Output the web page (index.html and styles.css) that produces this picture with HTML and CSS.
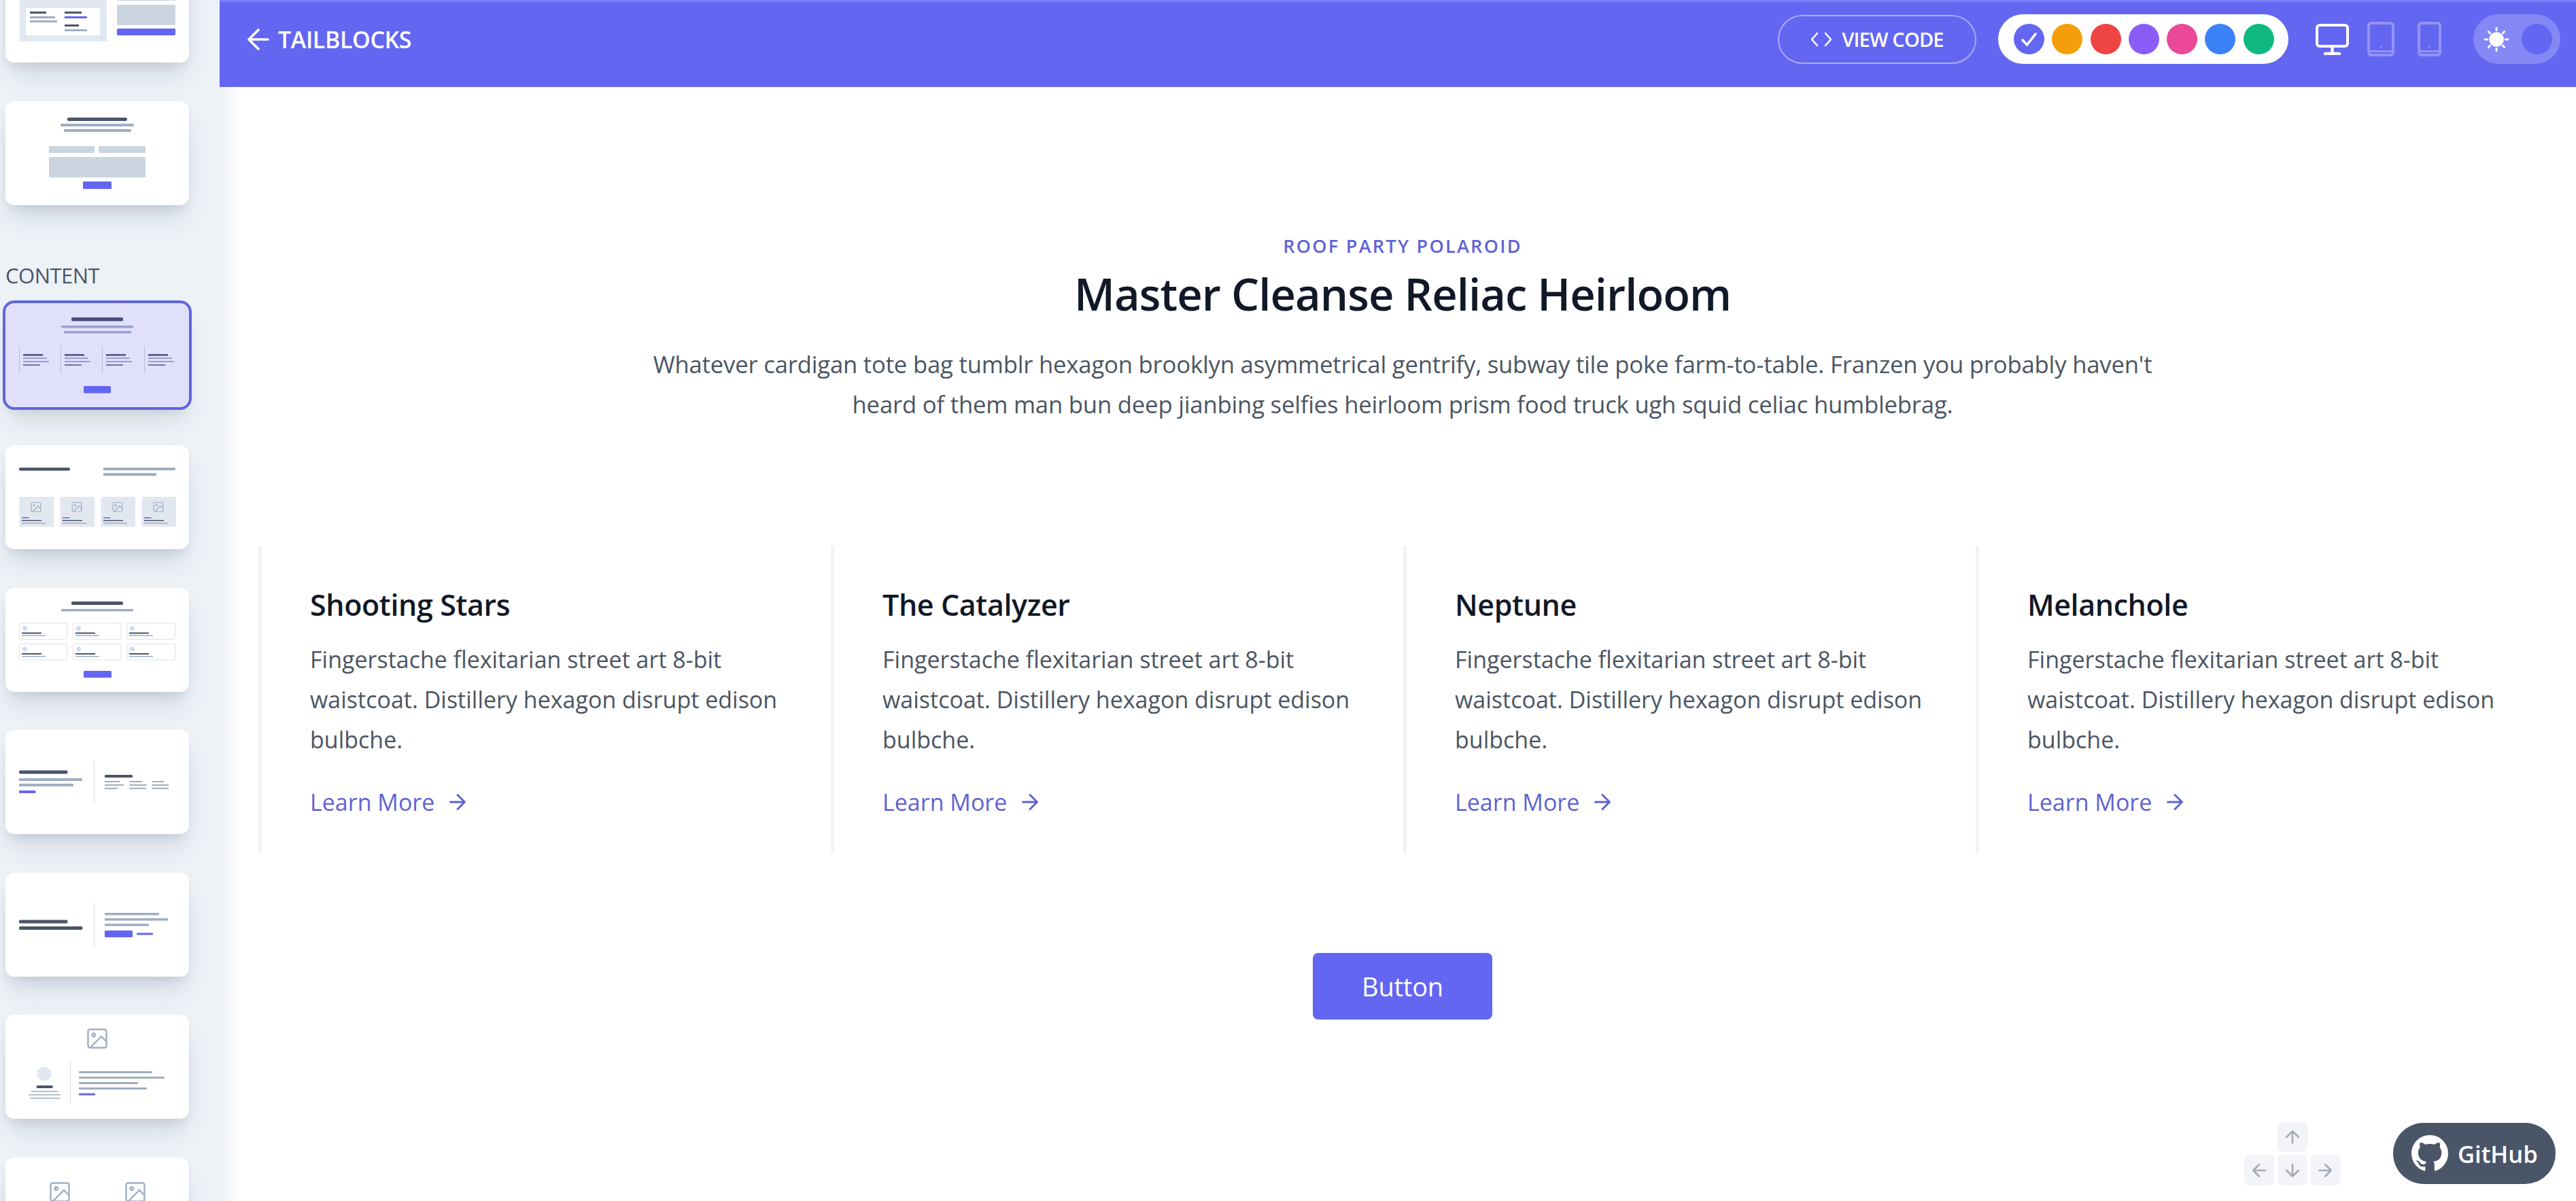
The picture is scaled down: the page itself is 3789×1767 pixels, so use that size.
FILE: index.html
```html
<!DOCTYPE html>
<html>
<head>
  <meta charset="utf-8">
  <title>Tailblocks</title>
  <link rel="stylesheet" href="styles.css">
</head>
<body>
  <svg class="defs" width="0" height="0">
    <symbol id="pic" viewBox="0 0 24 24">
      <rect x="3" y="3" width="18" height="18" rx="2" fill="none" stroke="currentColor" stroke-width="1.6"/>
      <circle cx="8.5" cy="8.5" r="1.5" fill="none" stroke="currentColor" stroke-width="1.6"/>
      <path d="M21 15l-5-5L5 21" fill="none" stroke="currentColor" stroke-width="1.6"/>
    </symbol>
    <symbol id="arrow-right" viewBox="0 0 24 24">
      <path d="M5 12h14M12 5l7 7-7 7" fill="none" stroke="currentColor" stroke-width="2" stroke-linecap="round" stroke-linejoin="round"/>
    </symbol>
  </svg>

  <aside class="sidebar">
    <div class="thumb-list">
      <div class="thumb">
        <svg viewBox="8 -61 270 153">
          <rect class="tile" x="29" y="-30" width="128" height="91"/>
          <rect class="paper" x="38" y="12" width="109" height="40"/>
          <rect class="dark" x="44" y="17" width="24" height="3"/>
          <rect class="grey" x="44" y="24" width="37" height="3"/>
          <rect class="grey" x="44" y="30" width="40" height="3"/>
          <rect class="dark" x="95" y="17" width="25" height="3"/>
          <rect class="blue" x="95" y="24" width="33" height="3"/>
          <rect class="dark" x="95" y="36" width="21" height="3"/>
          <rect class="grey" x="95" y="43" width="33" height="3"/>
          <rect class="field" x="172" y="-4" width="86" height="5"/>
          <rect class="field" x="172" y="7" width="86" height="30" rx="1"/>
          <rect class="blue" x="172" y="42" width="86" height="10" rx="1.5"/>
        </svg>
      </div>
      <div class="thumb">
        <svg viewBox="8 0 270 153">
          <rect class="dark" x="99" y="24" width="88" height="5" rx="2"/>
          <rect class="grey" x="89" y="33" width="108" height="4" rx="1"/>
          <rect class="grey" x="94" y="41" width="99" height="4" rx="1"/>
          <rect class="field" x="72" y="66" width="67" height="10" rx="1"/>
          <rect class="field" x="145" y="66" width="69" height="10" rx="1"/>
          <rect class="field" x="72" y="82" width="142" height="30" rx="1"/>
          <rect class="blue" x="122" y="118" width="42" height="11" rx="1.5"/>
        </svg>
      </div>

      <h3 class="thumb-label">CONTENT</h3>

      <div class="thumb thumb-active">
        <svg viewBox="0 0 270 153">
          <rect class="dark-tint" x="97" y="21" width="76" height="5.5" rx="2"/>
          <rect class="grey-tint" x="82" y="33" width="106" height="3.5" rx="1"/>
          <rect class="grey-tint" x="86" y="41" width="99" height="3.5" rx="1"/>
          <g>
            <rect class="rule-tint" x="20" y="63" width="1" height="40"/>
            <rect class="dark-tint" x="26" y="75" width="29" height="2.5"/>
            <rect class="grey-tint" x="26" y="80" width="35" height="2"/>
            <rect class="grey-tint" x="26" y="85" width="38" height="2"/>
            <rect class="dark-tint" opacity=".75" x="26" y="90" width="25" height="2"/>
          </g>
          <g transform="translate(61 0)">
            <rect class="rule-tint" x="20" y="63" width="1" height="40"/>
            <rect class="dark-tint" x="26" y="75" width="29" height="2.5"/>
            <rect class="grey-tint" x="26" y="80" width="35" height="2"/>
            <rect class="grey-tint" x="26" y="85" width="38" height="2"/>
            <rect class="dark-tint" opacity=".75" x="26" y="90" width="25" height="2"/>
          </g>
          <g transform="translate(122 0)">
            <rect class="rule-tint" x="20" y="63" width="1" height="40"/>
            <rect class="dark-tint" x="26" y="75" width="29" height="2.5"/>
            <rect class="grey-tint" x="26" y="80" width="35" height="2"/>
            <rect class="grey-tint" x="26" y="85" width="38" height="2"/>
            <rect class="dark-tint" opacity=".75" x="26" y="90" width="25" height="2"/>
          </g>
          <g transform="translate(184 0)">
            <rect class="rule-tint" x="20" y="63" width="1" height="40"/>
            <rect class="dark-tint" x="26" y="75" width="29" height="2.5"/>
            <rect class="grey-tint" x="26" y="80" width="35" height="2"/>
            <rect class="grey-tint" x="26" y="85" width="38" height="2"/>
            <rect class="dark-tint" opacity=".75" x="26" y="90" width="25" height="2"/>
          </g>
          <rect class="blue" x="115" y="122" width="40" height="10.5" rx="1.5"/>
        </svg>
      </div>

      <div class="thumb">
        <svg viewBox="0 0 270 153">
          <rect class="dark" x="20" y="33" width="75" height="4.5" rx="2"/>
          <rect class="grey" x="144" y="33" width="106" height="4" rx="1"/>
          <rect class="grey" x="144" y="41" width="78" height="4" rx="1"/>
          <g>
            <rect class="tile" x="20.5" y="76" width="50.5" height="44"/>
            <use href="#pic" class="pic" x="36" y="82" width="18" height="18"/>
            <rect class="blue" x="24" y="106" width="10.5" height="1.5"/>
            <rect class="dark" x="24" y="110" width="29" height="1.5"/>
            <rect class="grey" x="24" y="114" width="35" height="1.5"/>
          </g>
          <g transform="translate(60 0)">
            <rect class="tile" x="20.5" y="76" width="50.5" height="44"/>
            <use href="#pic" class="pic" x="36" y="82" width="18" height="18"/>
            <rect class="blue" x="24" y="106" width="10.5" height="1.5"/>
            <rect class="dark" x="24" y="110" width="29" height="1.5"/>
            <rect class="grey" x="24" y="114" width="35" height="1.5"/>
          </g>
          <g transform="translate(120 0)">
            <rect class="tile" x="20.5" y="76" width="50.5" height="44"/>
            <use href="#pic" class="pic" x="36" y="82" width="18" height="18"/>
            <rect class="blue" x="24" y="106" width="10.5" height="1.5"/>
            <rect class="dark" x="24" y="110" width="29" height="1.5"/>
            <rect class="grey" x="24" y="114" width="35" height="1.5"/>
          </g>
          <g transform="translate(180 0)">
            <rect class="tile" x="20.5" y="76" width="50.5" height="44"/>
            <use href="#pic" class="pic" x="36" y="82" width="18" height="18"/>
            <rect class="blue" x="24" y="106" width="10.5" height="1.5"/>
            <rect class="dark" x="24" y="110" width="29" height="1.5"/>
            <rect class="grey" x="24" y="114" width="35" height="1.5"/>
          </g>
        </svg>
      </div>

      <div class="thumb">
        <svg viewBox="0 0 270 153">
          <rect class="dark" x="97" y="20" width="76" height="5" rx="2"/>
          <rect class="grey" x="82" y="31" width="106" height="3.5" rx="1"/>
          <g id="boxes">
            <rect class="box" x="20.5" y="52" width="70" height="23.5" rx="1"/>
            <circle class="dot" cx="28.5" cy="59.5" r="3.5"/>
            <rect class="dark" x="24" y="65.5" width="29" height="2"/>
            <rect class="grey" x="24" y="69.5" width="35" height="1.5"/>
            <rect class="box" x="99.5" y="52" width="70.5" height="23.5" rx="1"/>
            <circle class="dot" cx="107.5" cy="59.5" r="3.5"/>
            <rect class="dark" x="103" y="65.5" width="29" height="2"/>
            <rect class="grey" x="103" y="69.5" width="35" height="1.5"/>
            <rect class="box" x="178.5" y="52" width="71" height="23.5" rx="1"/>
            <circle class="dot" cx="186.5" cy="59.5" r="3.5"/>
            <rect class="dark" x="182" y="65.5" width="29" height="2"/>
            <rect class="grey" x="182" y="69.5" width="35" height="1.5"/>
          </g>
          <use href="#boxes" y="30.5"/>
          <rect class="blue" x="115" y="122" width="41" height="10" rx="1.5"/>
        </svg>
      </div>

      <div class="thumb">
        <svg viewBox="0 0 270 153">
          <rect class="dark" x="20" y="59.5" width="71.5" height="5" rx="2"/>
          <rect class="grey" x="20" y="71" width="93" height="4" rx="1"/>
          <rect class="grey" x="20" y="79" width="80" height="4" rx="1"/>
          <rect class="blue" x="20" y="89" width="24.5" height="4" rx="1"/>
          <rect class="rule" x="130" y="45" width="1" height="64"/>
          <rect class="dark" x="146" y="66" width="41" height="4" rx="1.5"/>
          <rect class="grey" x="146" y="75" width="22" height="2"/>
          <rect class="grey" x="182.5" y="75" width="18.5" height="2"/>
          <rect class="grey" x="215.5" y="75" width="17.5" height="2"/>
          <rect class="grey" x="146" y="80" width="28" height="2"/>
          <rect class="grey" x="182.5" y="80" width="25" height="2"/>
          <rect class="grey" x="215.5" y="80" width="24.5" height="2"/>
          <rect class="grey" x="146" y="85" width="19" height="2"/>
          <rect class="grey" x="182.5" y="85" width="24.5" height="2"/>
          <rect class="grey" x="215.5" y="85" width="24.5" height="2"/>
        </svg>
      </div>

      <div class="thumb">
        <svg viewBox="0 0 270 153">
          <rect class="dark" x="20" y="69.5" width="71.5" height="5" rx="2"/>
          <rect class="dark" x="20" y="79" width="93.5" height="5" rx="2"/>
          <rect class="rule" x="130" y="44" width="1" height="64"/>
          <rect class="grey" x="146" y="59" width="80" height="3.5" rx="1"/>
          <rect class="grey" x="146" y="67" width="93" height="3.5" rx="1"/>
          <rect class="grey" x="146" y="75" width="65" height="3.5" rx="1"/>
          <rect class="blue" x="146" y="85" width="41" height="10" rx="1.5"/>
          <rect class="blue" x="193" y="88.5" width="24" height="3" rx="1"/>
        </svg>
      </div>

      <div class="thumb">
        <svg viewBox="0 0 270 153">
          <use href="#pic" class="pic" x="117" y="17" width="36" height="36"/>
          <circle class="tile" cx="57" cy="87" r="10.5"/>
          <rect class="dark" x="45.5" y="104" width="24.5" height="4" rx="2"/>
          <rect class="grey" x="38" y="112" width="40" height="1.5"/>
          <rect class="grey" x="34" y="117" width="47" height="1.5"/>
          <rect class="grey" x="36" y="122" width="44" height="1.5"/>
          <rect class="rule" x="95" y="68" width="1" height="64"/>
          <rect class="grey" x="108" y="83" width="108" height="3" rx="1"/>
          <rect class="grey" x="108" y="91" width="126" height="3" rx="1"/>
          <rect class="grey" x="108" y="99" width="87" height="3" rx="1"/>
          <rect class="grey" x="108" y="107" width="100" height="3" rx="1"/>
          <rect class="blue" x="108" y="115.5" width="24" height="3" rx="1"/>
        </svg>
      </div>

      <div class="thumb">
        <svg viewBox="0 0 270 153">
          <use href="#pic" class="pic" x="62" y="33" width="36" height="36"/>
          <use href="#pic" class="pic" x="173" y="33" width="36" height="36"/>
        </svg>
      </div>
    </div>
  </aside>

  <div class="page">
    <header class="topbar">
      <a class="back">
        <svg class="back-icon" viewBox="0 0 24 24"><path d="M19 12H5M12 19l-7-7 7-7" fill="none" stroke="#fff" stroke-width="1.8" stroke-linecap="round" stroke-linejoin="round"/></svg>
        TAILBLOCKS
      </a>
      <div class="tools">
        <button class="view-code">
          <svg class="code-icon" viewBox="0 0 32 22"><path d="M10 2L2 11l8 9M22 2l8 9-8 9" fill="none" stroke="#fff" stroke-width="2.6" stroke-linecap="round" stroke-linejoin="round"/></svg>
          VIEW CODE
        </button>
        <div class="palette">
          <span class="swatch swatch-indigo">
            <svg class="check" viewBox="0 0 45 45"><path d="M13 24l6.500 7L32 15" fill="none" stroke="#fff" stroke-width="3.600" stroke-linecap="round" stroke-linejoin="round"/></svg>
          </span>
          <span class="swatch swatch-amber"></span>
          <span class="swatch swatch-red"></span>
          <span class="swatch swatch-violet"></span>
          <span class="swatch swatch-pink"></span>
          <span class="swatch swatch-blue"></span>
          <span class="swatch swatch-green"></span>
        </div>
        <div class="devices">
          <svg class="device-desktop" viewBox="0 0 49 46">
            <rect x="2" y="2" width="45" height="31" rx="4" fill="none" stroke="#fff" stroke-width="4"/>
            <path d="M24.500 33v9M14 44h21" stroke="#fff" stroke-width="4.500" stroke-linecap="round"/>
          </svg>
          <svg class="device-tablet" viewBox="0 0 40 51">
            <rect x="2" y="2" width="36" height="47" rx="4" fill="none" stroke="#fff" stroke-width="4"/>
            <path d="M2 43.500h36" stroke="#fff" stroke-width="3"/>
            <path d="M20 35v3.500" stroke="#fff" stroke-width="2"/>
          </svg>
          <svg class="device-phone" viewBox="0 0 35 51">
            <rect x="2" y="2" width="31" height="47" rx="4" fill="none" stroke="#fff" stroke-width="4"/>
            <path d="M2 43.500h31" stroke="#fff" stroke-width="3"/>
            <path d="M17.500 35v3.500" stroke="#fff" stroke-width="2"/>
          </svg>
        </div>
        <div class="theme-toggle">
          <svg class="sun" viewBox="0 0 44 44">
            <circle cx="22" cy="22" r="12.500" fill="#fff"/>
            <path d="M22 2.500v4M22 37.500v4M2.500 22h4M37.500 22h4M8.500 8.500l2.500 3M33 32.500l2.500 3M8.500 35.500l2.500-3M33 11.500l2.500-3" stroke="#fff" stroke-width="3.400" stroke-linecap="round"/>
          </svg>
          <span class="knob"></span>
        </div>
      </div>
    </header>

    <main class="content">
      <div class="intro">
        <h2 class="eyebrow">ROOF PARTY POLAROID</h2>
        <h1 class="headline">Master Cleanse Reliac Heirloom</h1>
        <p class="lead">Whatever cardigan tote bag tumblr hexagon brooklyn asymmetrical gentrify, subway tile poke farm-to-table. Franzen you probably haven't heard of them man bun deep jianbing selfies heirloom prism food truck ugh squid celiac humblebrag.</p>
      </div>

      <div class="features">
        <div class="feature">
          <h3 class="feature-title">Shooting Stars</h3>
          <p class="feature-text">Fingerstache flexitarian street art 8-bit waistcoat. Distillery hexagon disrupt edison bulbche.</p>
          <a class="more">Learn More <svg class="more-icon"><use href="#arrow-right"/></svg></a>
        </div>
        <div class="feature">
          <h3 class="feature-title">The Catalyzer</h3>
          <p class="feature-text">Fingerstache flexitarian street art 8-bit waistcoat. Distillery hexagon disrupt edison bulbche.</p>
          <a class="more">Learn More <svg class="more-icon"><use href="#arrow-right"/></svg></a>
        </div>
        <div class="feature">
          <h3 class="feature-title">Neptune</h3>
          <p class="feature-text">Fingerstache flexitarian street art 8-bit waistcoat. Distillery hexagon disrupt edison bulbche.</p>
          <a class="more">Learn More <svg class="more-icon"><use href="#arrow-right"/></svg></a>
        </div>
        <div class="feature">
          <h3 class="feature-title">Melanchole</h3>
          <p class="feature-text">Fingerstache flexitarian street art 8-bit waistcoat. Distillery hexagon disrupt edison bulbche.</p>
          <a class="more">Learn More <svg class="more-icon"><use href="#arrow-right"/></svg></a>
        </div>
      </div>

      <button class="cta">Button</button>
    </main>
  </div>

  <div class="keys">
    <span class="key key-up"><svg class="key-icon" viewBox="0 0 24 24"><path d="M12 19V5M5 12l7-7 7 7"/></svg></span>
    <span class="key key-left"><svg class="key-icon" viewBox="0 0 24 24"><path d="M19 12H5M12 19l-7-7 7-7"/></svg></span>
    <span class="key key-down"><svg class="key-icon" viewBox="0 0 24 24"><path d="M12 5v14M19 12l-7 7-7-7"/></svg></span>
    <span class="key key-right"><svg class="key-icon" viewBox="0 0 24 24"><path d="M5 12h14M12 5l7 7-7 7"/></svg></span>
  </div>

  <a class="github">
    <svg class="github-icon" viewBox="0 0 16 16"><path fill="#fff" d="M8 0C3.58 0 0 3.58 0 8c0 3.54 2.290 6.530 5.470 7.590.4.070.55-.17.55-.38 0-.19-.01-.82-.01-1.490-2.010.37-2.530-.49-2.690-.94-.09-.23-.48-.94-.82-1.130-.28-.15-.68-.52-.01-.53.63-.01 1.080.58 1.230.82.72 1.210 1.870.87 2.330.66.07-.52.28-.87.51-1.070-1.780-.2-3.640-.89-3.640-3.950 0-.87.31-1.590.82-2.150-.08-.2-.36-1.020.08-2.120 0 0 .67-.21 2.200.82.64-.18 1.320-.27 2-.27.68 0 1.360.09 2 .27 1.530-1.040 2.200-.82 2.200-.82.44 1.100.16 1.920.08 2.120.51.56.82 1.270.82 2.150 0 3.070-1.870 3.750-3.650 3.950.29.25.54.73.54 1.480 0 1.070-.01 1.930-.01 2.200 0 .21.15.46.55.38A8.013 8.013 0 0016 8c0-4.420-3.580-8-8-8z"/></svg>
    GitHub
  </a>
</body>
</html>
```

FILE: styles.css
```css
* {
  box-sizing: border-box;
}

html, body {
  height: 100%;
}

body {
  margin: 0;
  display: flex;
  overflow: hidden;
  background: #fff;
  color: #4b5563;
  font-family: "Open Sans", "Noto Sans", sans-serif;
}

.defs {
  position: absolute;
}

/* sidebar with the block thumbnails */
.sidebar {
  flex: 0 0 323px;
  height: 100%;
  overflow: hidden;
  background: #edf2f7;
}

.thumb-list {
  margin-top: -61px;
  padding: 0 45px 0 8px;
}

.thumb {
  width: 270px;
  height: 153px;
  margin-bottom: 56.5px;
  background: #fff;
  border-radius: 13px;
  box-shadow: 0 22px 34px -7px rgba(45, 65, 100, .17), 0 9px 13px -5px rgba(45, 65, 100, .1);
}

.thumb svg {
  display: block;
  width: 270px;
  height: 153px;
}

.thumb-active {
  background: #e0e0fb;
  outline: 4px solid #5f66da;
  outline-offset: 0;
}

.thumb-label {
  margin: 83px 0 21px;
  font-size: 31px;
  font-weight: 400;
  line-height: 40px;
  letter-spacing: -.5px;
  color: #4a5568;
}

.dark { fill: #4a5568; }
.grey { fill: #a0aec0; }
.blue { fill: #6366f1; }
.tile { fill: #e2e8f0; }
.paper { fill: #fff; }
.field { fill: #cbd5e0; }
.rule { fill: #d5dae1; }
.dark-tint { fill: #4b5080; }
.grey-tint { fill: #9aa1cd; }
.rule-tint { fill: #b9bcd8; }
.dot { fill: #cbdcf7; }
.box { fill: #fff; stroke: #d5dae1; stroke-width: .8; }
.pic { color: #a0aec0; }

/* right hand side */
.page {
  flex: 1;
  min-width: 0;
  display: flex;
  flex-direction: column;
}

.topbar {
  height: 128px;
  flex: none;
  display: flex;
  align-items: center;
  justify-content: space-between;
  padding: 0 23px 16px 33px;
  background: #6366f1;
  border-top: 3px solid #7a80f5;
  color: #fff;
}

.back {
  display: flex;
  align-items: center;
  gap: 5px;
  font-size: 34px;
  font-weight: 600;
  letter-spacing: -.4px;
}

.back-icon {
  width: 48px;
  height: 48px;
}

.tools {
  display: flex;
  align-items: center;
}

.view-code {
  display: flex;
  align-items: center;
  justify-content: center;
  gap: 14px;
  width: 292px;
  height: 72px;
  margin-right: 32px;
  background: none;
  border: 2.5px solid rgba(255, 255, 255, .45);
  border-radius: 36px;
  color: #fff;
  font-family: inherit;
  font-size: 29px;
  font-weight: 600;
  letter-spacing: -.8px;
}

.code-icon {
  width: 32px;
  height: 22px;
}

.palette {
  display: flex;
  align-items: center;
  gap: 11.300px;
  width: 427px;
  height: 73px;
  padding: 0 22px 0 23px;
  margin-right: 40px;
  background: #fff;
  border-radius: 37px;
}

.swatch {
  flex: none;
  width: 45px;
  height: 45px;
  border-radius: 50%;
}

.swatch-indigo { background: #6366f1; }
.swatch-amber { background: #f59e0b; }
.swatch-red { background: #ef4444; }
.swatch-violet { background: #8b5cf6; }
.swatch-pink { background: #ec4899; }
.swatch-blue { background: #3b82f6; }
.swatch-green { background: #10b981; }

.check {
  display: block;
}

.devices {
  display: flex;
  align-items: center;
  margin-right: 47px;
}

.device-desktop {
  width: 49px;
  height: 46px;
  margin-right: 27px;
}

.device-tablet {
  width: 40px;
  height: 51px;
  margin-right: 34px;
  opacity: .3;
}

.device-phone {
  width: 35px;
  height: 51px;
  opacity: .3;
}

.theme-toggle {
  display: flex;
  align-items: center;
  justify-content: space-between;
  width: 128px;
  height: 73px;
  padding: 0 12px 0 15px;
  background: #8388f4;
  border-radius: 37px;
}

.sun {
  width: 38px;
  height: 38px;
}

.knob {
  width: 45px;
  height: 45px;
  border-radius: 50%;
  background: #6366f1;
}

/* block preview */
.content {
  flex: 1;
  padding: 0 0 0 14px;
  background: linear-gradient(to right, #edf1f6, #fff 30px);
}

.intro {
  padding-top: 214px;
  text-align: center;
}

.eyebrow {
  margin: 0 0 5px;
  font-size: 27px;
  line-height: 40px;
  font-weight: 600;
  letter-spacing: 2.300px;
  color: #5f63d8;
}

.headline {
  margin: 0 0 30px;
  font-size: 65px;
  line-height: 90px;
  font-weight: 600;
  letter-spacing: -.9px;
  color: #111827;
}

.lead {
  width: 2260px;
  margin: 0 auto;
  font-size: 34.700px;
  line-height: 58.500px;
  letter-spacing: -.2px;
}

.features {
  display: grid;
  grid-template-columns: repeat(4, 842px);
  margin: 179px 0 0 43px;
}

.feature {
  height: 452px;
  padding: 60px 72px 0 71px;
  border-left: 5px solid #f2f3f6;
}

.feature-title {
  margin: 0 0 24px;
  font-size: 43px;
  line-height: 54px;
  font-weight: 600;
  letter-spacing: -.4px;
  color: #111827;
}

.feature-text {
  margin: 0 0 32px;
  font-size: 34px;
  line-height: 59px;
}

.more {
  display: flex;
  align-items: center;
  font-size: 34px;
  line-height: 60px;
  color: #5f63d0;
}

.more-icon {
  width: 36px;
  height: 36px;
  margin-left: 16px;
}

.cta {
  display: block;
  width: 264px;
  height: 98px;
  margin: 147px auto 0;
  background: #6366f1;
  border: 0;
  border-radius: 8px;
  color: #fff;
  font-family: inherit;
  font-size: 38px;
  letter-spacing: -.2px;
}

/* things floating over the page */
.keys {
  position: fixed;
  left: 3301px;
  top: 1651px;
  display: grid;
  grid-template-columns: repeat(3, 44.500px);
  grid-template-rows: 44px 45px;
  gap: 4px;
}

.key {
  display: flex;
  align-items: center;
  justify-content: center;
  background: #f2f4f9;
  border-radius: 8px;
}

.key-up { grid-area: 1 / 2; }
.key-left { grid-area: 2 / 1; }
.key-down { grid-area: 2 / 2; }
.key-right { grid-area: 2 / 3; }

.key-icon {
  width: 30px;
  height: 30px;
  fill: none;
  stroke: #a3a9b5;
  stroke-width: 2;
  stroke-linecap: round;
  stroke-linejoin: round;
}

.github {
  position: fixed;
  left: 3520px;
  top: 1652px;
  display: flex;
  align-items: center;
  gap: 14px;
  width: 239px;
  height: 90px;
  padding-left: 27px;
  background: #4a5568;
  border-radius: 45px;
  color: #fff;
  font-size: 34.500px;
  font-weight: 600;
}

.github-icon {
  width: 54px;
  height: 54px;
}
```
